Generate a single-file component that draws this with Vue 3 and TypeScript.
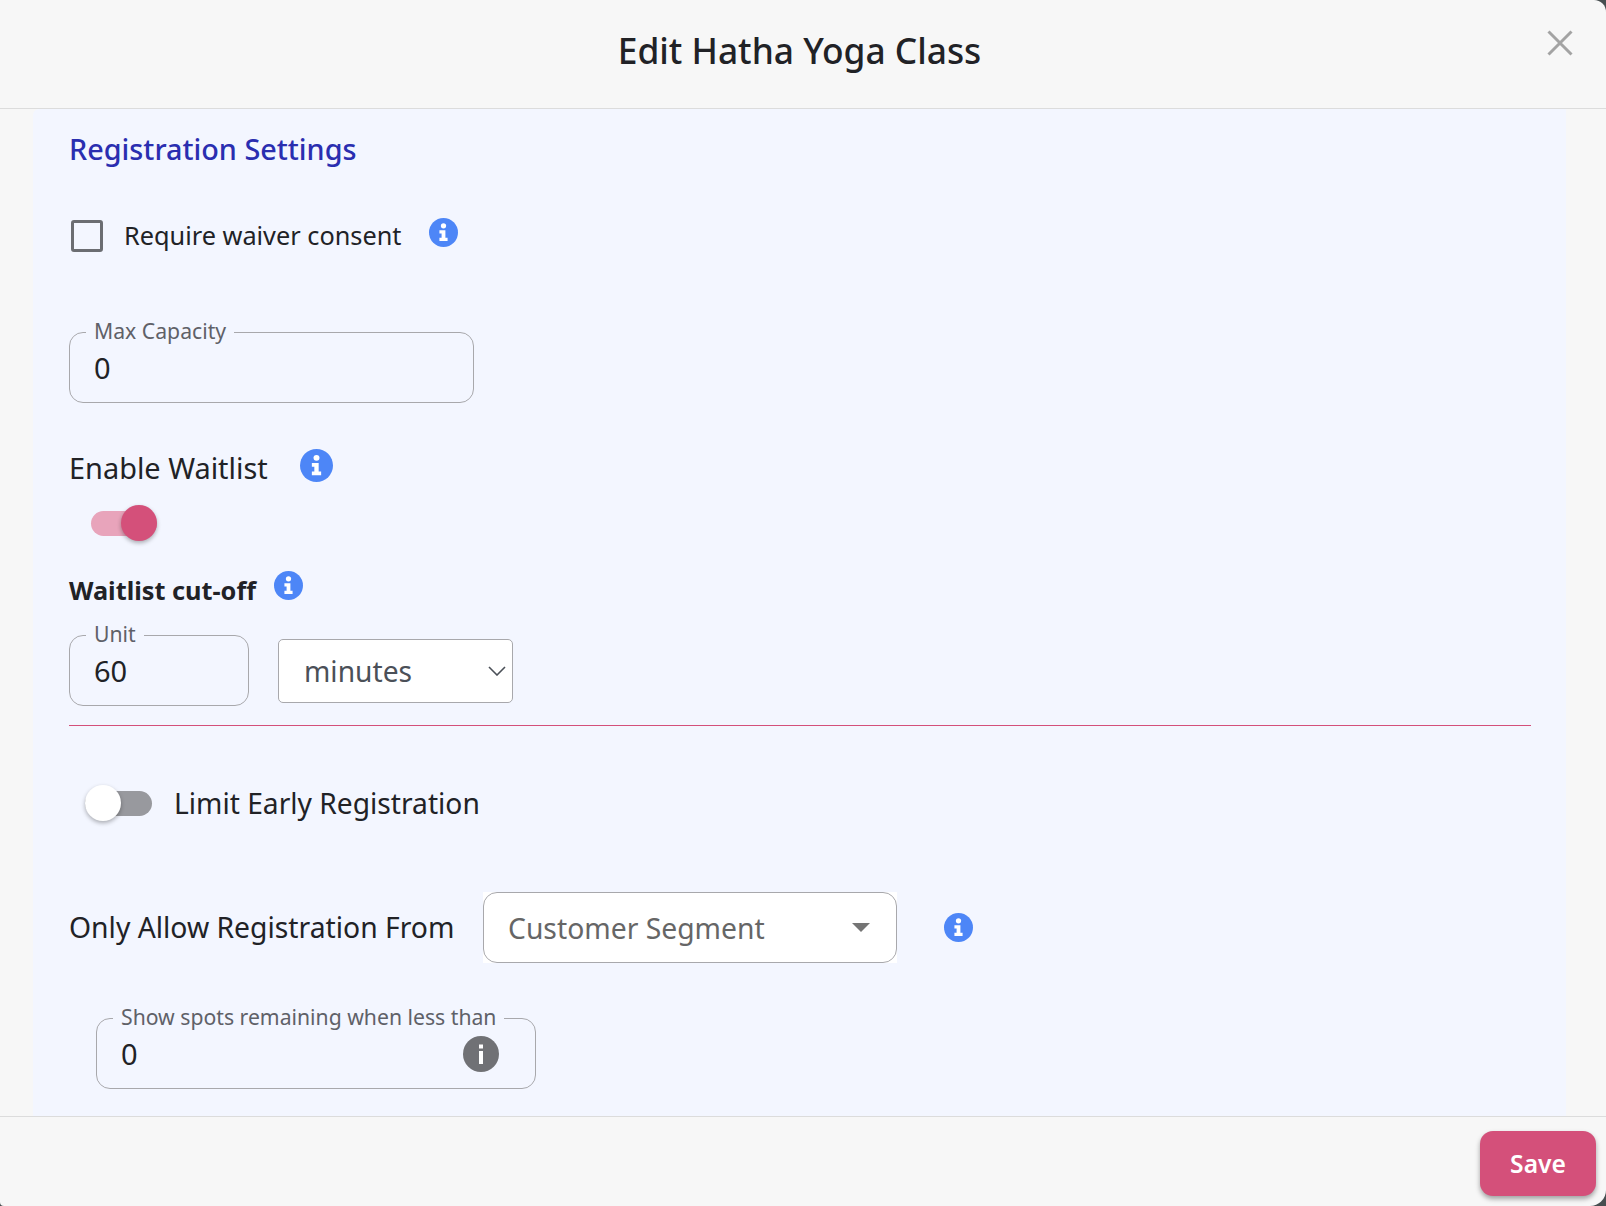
<template>
  <div class="modal">
    <header class="modal__header">
      <h1 class="modal__title">Edit Hatha Yoga Class</h1>
      <button class="modal__close" aria-label="Close">
        <svg width="26" height="26" viewBox="0 0 26 26" fill="none" stroke="#a3a3a3" stroke-width="3">
          <path d="M1.5 1.5 24.5 24.5M24.5 1.5 1.5 24.5" />
        </svg>
      </button>
    </header>

    <main class="modal__body">
      <section class="panel">
        <h2 class="panel__title">Registration Settings</h2>

        <div class="waiver">
          <span class="checkbox"></span>
          <span class="waiver__label">Require waiver consent</span>
          <svg class="info info--waiver" viewBox="0 0 32 32">
            <circle cx="16" cy="16" r="16" fill="#4d86f7" />
            <circle cx="16" cy="8.6" r="2.9" fill="#fff" />
            <path d="M11.5 13.5h6.6v8.4h2.4v3.6h-9v-3.6h2.4v-4.8h-2.4z" fill="#fff" />
          </svg>
        </div>

        <fieldset class="field field--capacity">
          <legend>Max Capacity</legend>
          <span class="field__value">{{ maxCapacity }}</span>
        </fieldset>

        <div class="waitlist">
          <span class="waitlist__label">Enable Waitlist</span>
          <svg class="info info--waitlist" viewBox="0 0 32 32">
            <circle cx="16" cy="16" r="16" fill="#4d86f7" />
            <circle cx="16" cy="8.6" r="2.9" fill="#fff" />
            <path d="M11.5 13.5h6.6v8.4h2.4v3.6h-9v-3.6h2.4v-4.8h-2.4z" fill="#fff" />
          </svg>
        </div>
        <div class="switch switch--on"><span class="switch__thumb"></span></div>

        <div class="cutoff">
          <span class="cutoff__label">Waitlist cut-off</span>
          <svg class="info info--cutoff" viewBox="0 0 32 32">
            <circle cx="16" cy="16" r="16" fill="#4d86f7" />
            <circle cx="16" cy="8.6" r="2.9" fill="#fff" />
            <path d="M11.5 13.5h6.6v8.4h2.4v3.6h-9v-3.6h2.4v-4.8h-2.4z" fill="#fff" />
          </svg>
        </div>

        <div class="cutoff-row">
          <fieldset class="field field--unit">
            <legend>Unit</legend>
            <span class="field__value">{{ cutoffValue }}</span>
          </fieldset>
          <div class="unit-select">
            <span>minutes</span>
            <svg width="18" height="10" viewBox="0 0 18 10" fill="none" stroke="#4b5058" stroke-width="1.6">
              <path d="M1 1l8 8 8-8" />
            </svg>
          </div>
        </div>

        <hr class="divider" />

        <div class="early">
          <div class="switch switch--off"><span class="switch__thumb"></span></div>
          <span class="early__label">Limit Early Registration</span>
        </div>

        <div class="from">
          <span class="from__label">Only Allow Registration From</span>
          <div class="segment">
            <div class="segment__inner">
              <span>Customer Segment</span>
              <span class="segment__caret"></span>
            </div>
          </div>
          <svg class="info info--from" viewBox="0 0 32 32">
            <circle cx="16" cy="16" r="16" fill="#4d86f7" />
            <circle cx="16" cy="8.6" r="2.9" fill="#fff" />
            <path d="M11.5 13.5h6.6v8.4h2.4v3.6h-9v-3.6h2.4v-4.8h-2.4z" fill="#fff" />
          </svg>
        </div>

        <fieldset class="field field--spots">
          <legend>Show spots remaining when less than</legend>
          <span class="field__value">{{ spotsValue }}</span>
          <svg class="spots-info" viewBox="0 0 36 36">
            <circle cx="18" cy="18" r="18" fill="#707175" />
            <rect x="16" y="8.5" width="4" height="4" fill="#fff" />
            <rect x="16" y="15" width="4" height="13" fill="#fff" />
          </svg>
        </fieldset>
      </section>
    </main>

    <footer class="modal__footer">
      <button class="save">Save</button>
    </footer>
  </div>
</template>

<script setup lang="ts">
const maxCapacity = 0
const cutoffValue = 60
const spotsValue = 0
</script>

<style>
html,
body {
  margin: 0;
  background: #474e50;
}
</style>

<style scoped>
.modal {
  width: 1606px;
  height: 1206px;
  display: flex;
  flex-direction: column;
  background: #f7f7f7;
  border-radius: 0 12px 16px 4px;
  overflow: hidden;
  font-family: "Noto Sans", sans-serif;
  color: #212226;
}
.modal__header {
  height: 108px;
  flex: none;
  position: relative;
  display: flex;
  align-items: center;
  justify-content: center;
  border-bottom: 1px solid #dcdcdc;
  box-sizing: content-box;
  padding-right: 7px;
}
.modal__title {
  margin: 0 0 8px;
  font-size: 35.3px;
  font-weight: 500;
  color: #212226;
}
.modal__close {
  position: absolute;
  top: 30px;
  right: 33px;
  padding: 0;
  border: 0;
  background: none;
  line-height: 0;
}
.modal__body {
  flex: 1;
  min-height: 0;
  padding: 0 40px 0 33px;
  overflow: hidden;
}
.panel {
  height: 100%;
  box-sizing: border-box;
  padding: 20px 36px 0;
  background: #f3f6ff;
  border-radius: 6px 0 0 0;
}
.panel__title {
  margin: 0;
  font-size: 28.8px;
  line-height: 40px;
  font-weight: 500;
  color: #2a2eb0;
}
.waiver {
  display: flex;
  align-items: flex-start;
  margin: 51px 0 0 2px;
}
.checkbox {
  width: 32px;
  height: 32px;
  box-sizing: border-box;
  border: 3.5px solid #6b6d72;
  border-radius: 3px;
}
.waiver__label {
  margin: -1px 0 0 21px;
  font-size: 25.3px;
  line-height: 32px;
}
.info {
  flex: none;
  display: block;
}
.info--waiver {
  width: 29px;
  height: 29px;
  margin: -2px 0 0 28px;
}
.field {
  margin: 0;
  box-sizing: border-box;
  border: 1px solid #a8a8ac;
  border-radius: 14px;
  padding: 0 24px;
  min-width: 0;
  position: relative;
}
.field legend {
  position: relative;
  top: -1.5px;
  padding: 0 8px;
  margin-left: -8px;
  font-size: 21.2px;
  line-height: 24px;
  color: #5f6168;
}
.field__value {
  display: block;
  margin-top: 4px;
  font-size: 29px;
  line-height: 40px;
  color: #212226;
}
.field--capacity {
  width: 405px;
  height: 83px;
  margin-top: 68px;
}
.waitlist {
  display: flex;
  margin-top: 43px;
}
.waitlist__label {
  font-size: 28.9px;
  line-height: 44px;
}
.info--waitlist {
  width: 33px;
  height: 33px;
  margin: 3px 0 0 32px;
}
.switch {
  position: relative;
  height: 25px;
  border-radius: 13px;
}
.switch__thumb {
  position: absolute;
  top: -6px;
  width: 36px;
  height: 36px;
  border-radius: 50%;
  box-shadow: 0 2px 4px rgba(0, 0, 0, 0.3);
}
.switch--on {
  width: 66px;
  margin: 21px 0 0 22px;
  background: #e8a4bb;
}
.switch--on .switch__thumb {
  right: 0;
  background: #d4507a;
}
.switch--off {
  width: 67px;
  flex: none;
  background: #98999e;
}
.switch--off .switch__thumb {
  left: 0;
  background: #fff;
}
.cutoff {
  display: flex;
  margin-top: 36px;
}
.cutoff__label {
  font-size: 25.3px;
  line-height: 36px;
  font-weight: 700;
}
.info--cutoff {
  width: 29px;
  height: 29px;
  margin: -1px 0 0 18px;
}
.cutoff-row {
  display: flex;
  align-items: center;
  gap: 29px;
  margin-top: 15px;
}
.field--unit {
  width: 180px;
  height: 83px;
}
.unit-select {
  width: 235px;
  height: 64px;
  box-sizing: border-box;
  margin-top: 13px;
  padding: 0 6px 0 25px;
  display: flex;
  align-items: center;
  justify-content: space-between;
  background: #fff;
  border: 1px solid #a8a8ac;
  border-radius: 5px;
  font-size: 28.2px;
  color: #4b5058;
}
.divider {
  margin: 19px 0 0;
  border: 0;
  border-top: 1px solid #d4507a;
  width: 1462px;
}
.early {
  display: flex;
  align-items: center;
  margin: 59px 0 0 16px;
}
.early__label {
  margin-left: 22px;
  font-size: 28.2px;
  line-height: 36px;
}
.from {
  display: flex;
  align-items: center;
  margin-top: 71px;
}
.from__label {
  margin-top: -2px;
  font-size: 28.3px;
  line-height: 40px;
  width: 414px;
  flex: none;
}
.segment {
  width: 414px;
  height: 71px;
  background: #fff;
}
.segment__inner {
  height: 100%;
  box-sizing: border-box;
  padding: 0 26px 0 24px;
  display: flex;
  align-items: center;
  justify-content: space-between;
  border: 1px solid #a8a8ac;
  border-radius: 14px;
  font-size: 28.3px;
  color: #666;
}
.segment__caret {
  width: 0;
  height: 0;
  border-left: 9px solid transparent;
  border-right: 9px solid transparent;
  border-top: 9px solid #757575;
}
.info--from {
  width: 29px;
  height: 29px;
  margin: -1px 0 0 47px;
}
.field--spots {
  width: 440px;
  height: 83px;
  margin: 43px 0 0 27px;
}
.spots-info {
  position: absolute;
  right: 36px;
  top: 6px;
  width: 36px;
  height: 36px;
}
.modal__footer {
  height: 90px;
  flex: none;
  box-sizing: border-box;
  border-top: 1px solid #dcdcdc;
  padding: 14px 10px 0 0;
  display: flex;
  justify-content: flex-end;
  align-items: flex-start;
}
.save {
  width: 116px;
  height: 65px;
  border: 0;
  border-radius: 13px;
  background: #d4507a;
  color: #fff;
  font-family: inherit;
  font-size: 24.6px;
  font-weight: 600;
  box-shadow: 0 3px 5px rgba(0, 0, 0, 0.35);
}
</style>
